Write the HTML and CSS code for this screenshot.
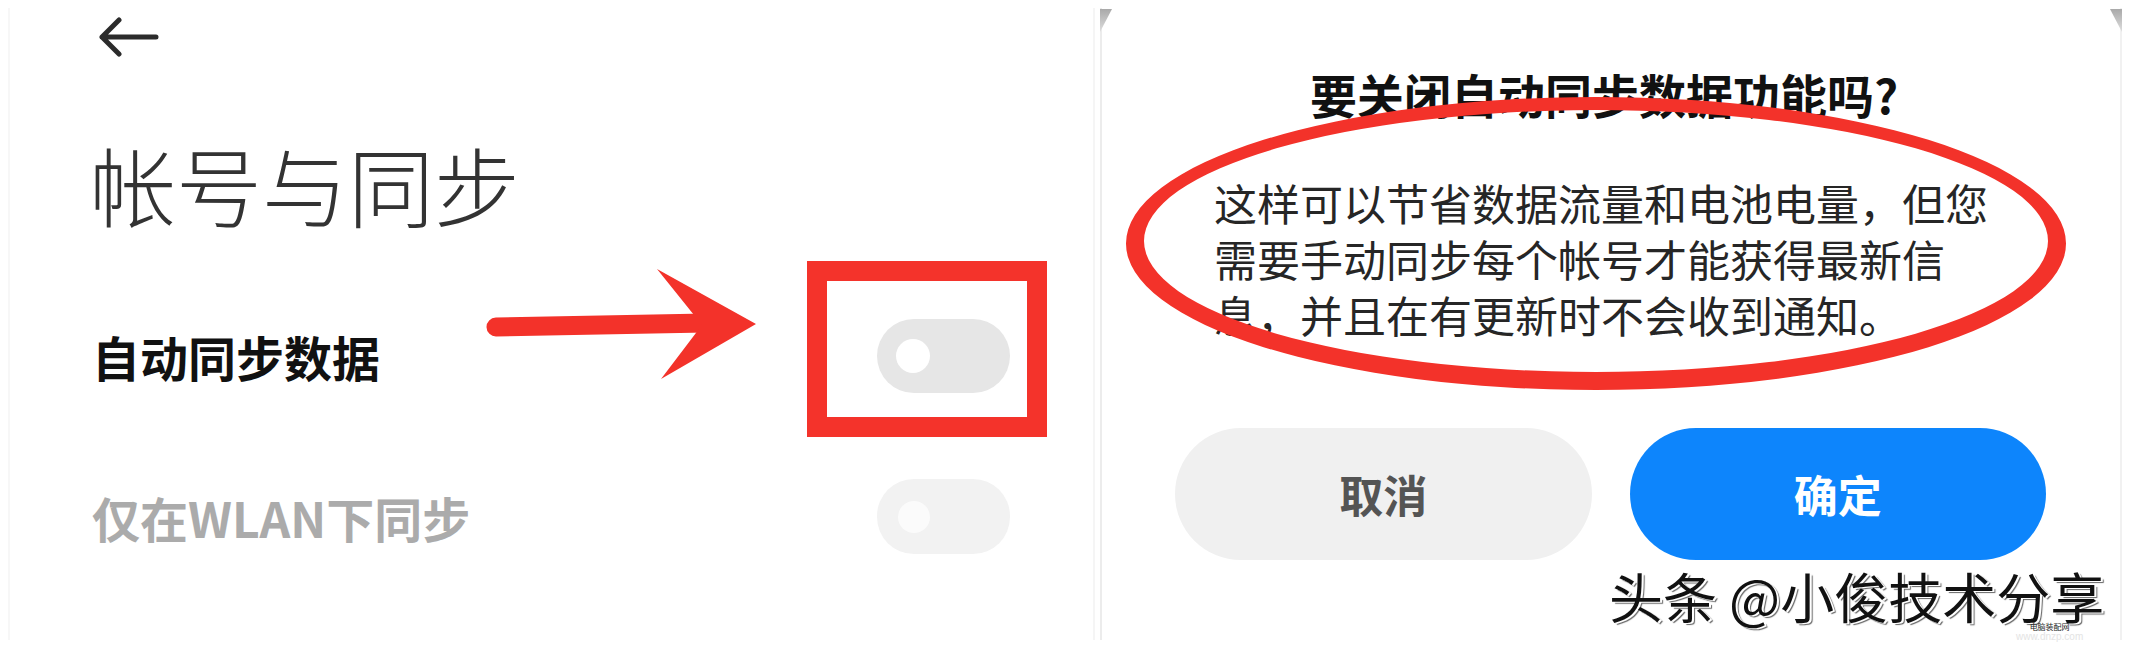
FILE: index.html
```html
<!DOCTYPE html>
<html lang="zh-CN">
<head>
<meta charset="utf-8">
<title>帐号与同步</title>
<link rel="stylesheet" href="styles.css">
</head>
<body>
<div class="page">
  <section class="panel panel-left">
    <header class="topbar">
      <svg class="back" viewBox="0 0 60 42" width="60" height="42" aria-label="返回">
        <path d="M20 4 L3 21 L20 38 M3 21 H57" fill="none" stroke="#2b2b2b" stroke-width="5" stroke-linecap="round" stroke-linejoin="round"/>
      </svg>
    </header>
    <h1 class="page-title">帐号与同步</h1>
    <div class="row">
      <span class="row-label">自动同步数据</span>
      <span class="switch"><span class="knob"></span></span>
    </div>
    <div class="row row-disabled">
      <span class="row-label">仅在WLAN下同步</span>
      <span class="switch switch-disabled"><span class="knob"></span></span>
    </div>
    <div class="mark-box"></div>
    <svg class="mark-arrow" viewBox="480 255 290 135" width="290" height="135">
      <line x1="496" y1="327" x2="706" y2="323" stroke="#f3322a" stroke-width="19" stroke-linecap="round"/>
      <polygon points="657,269 756,324 661,379 702,325" fill="#f3322a"/>
    </svg>
  </section>
  <section class="panel panel-right">
    <h2 class="dialog-title">要关闭自动同步数据功能吗?</h2>
    <p class="dialog-body">这样可以节省数据流量和电池电量，但您需要手动同步每个帐号才能获得最新信息，并且在有更新时不会收到通知。</p>
    <div class="actions">
      <button class="btn btn-cancel">取消</button>
      <button class="btn btn-ok">确定</button>
    </div>
    <svg class="mark-ellipse" viewBox="1110 85 980 320" width="980" height="320">
      <path fill="#f3322a" fill-rule="evenodd" d="M1126 243.5 A470 146.5 0 1 0 2066 243.5 A470 146.5 0 1 0 1126 243.5 Z M1144 241 A452 131 0 1 0 2048 241 A452 131 0 1 0 1144 241 Z"/>
    </svg>
    <div class="watermark">头条 @小俊技术分享</div>
    <div class="tiny-mark"><span class="tiny-dark">电脑装配网</span><span class="tiny-light">www.dnzp.com</span></div>
  </section>
</div>
</body>
</html>
```

FILE: styles.css
```css
* { box-sizing: border-box; }

html, body {
  margin: 0;
  padding: 0;
  background: #ffffff;
}

body {
  width: 2131px;
  height: 646px;
  overflow: hidden;
  font-family: "Noto Sans CJK SC", "Noto Sans", sans-serif;
}

.page {
  display: flex;
  gap: 5px;
  height: 646px;
  padding: 8px 9px 6px 8px;
}

.panel {
  position: relative;
  background: #ffffff;
}

.panel-left {
  width: 1087px;
  flex: none;
  display: flex;
  flex-direction: column;
  padding-left: 84px;
  border-left: 2px solid #f7f7f7;
  border-right: 2px solid #f5f5f5;
}

.topbar {
  padding-top: 8px;
  padding-left: 5px;
  height: 50px;
}

.back { display: block; }

.page-title {
  margin: 83px 0 0 -4px;
  font-size: 86px;
  line-height: 86px;
  font-weight: 300;
  color: #333333;
  letter-spacing: 0;
}

.row {
  height: 161px;
  display: flex;
  align-items: center;
  justify-content: space-between;
  padding-right: 83px;
}

.page-title + .row { margin-top: 48px; }

.row-label {
  font-size: 48px;
  font-weight: 700;
  color: #111111;
  margin-left: -2px;
}

.row-disabled .row-label { color: #ababab; }

.switch {
  width: 133px;
  height: 74px;
  border-radius: 37px;
  background: #e6e6e6;
  display: flex;
  align-items: center;
  padding-left: 19px;
}

.knob {
  width: 34px;
  height: 34px;
  border-radius: 50%;
  background: #ffffff;
}

.switch-disabled {
  height: 75px;
  background: #f2f2f2;
  padding-left: 21px;
}

.switch-disabled .knob {
  width: 32px;
  height: 32px;
  background: #fbfbfb;
}

.mark-box {
  position: absolute;
  left: 797px;
  top: 253px;
  width: 240px;
  height: 176px;
  border: 20px solid #f4332b;
}

.mark-arrow {
  position: absolute;
  left: 470px;
  top: 247px;
}

.panel-right {
  flex: 1;
  display: flex;
  flex-direction: column;
  border-left: 2px solid #ececec;
  border-right: 2px solid #f1f1f1;
}

.panel-right::before,
.panel-right::after {
  content: "";
  position: absolute;
  top: 1px;
  width: 12px;
  height: 23px;
  background: linear-gradient(#a9a9a9, #dedede);
}

.panel-right::before {
  left: -2px;
  clip-path: polygon(0 0, 100% 0, 0 100%);
}

.panel-right::after {
  right: -2px;
  clip-path: polygon(0 0, 100% 0, 100% 100%);
}

.dialog-title {
  margin: 62px 14px 0 0;
  text-align: center;
  font-size: 47px;
  line-height: 47px;
  font-weight: 700;
  color: #111111;
}

.dialog-body {
  margin: 57px 0 0 0;
  padding: 0 116px 0 112px;
  font-size: 43px;
  line-height: 56px;
  font-weight: 400;
  color: #262626;
}

.actions {
  margin-top: 86px;
  display: flex;
  gap: 38px;
  padding: 0 74px 0 73px;
}

.btn {
  flex: 1;
  height: 132px;
  border: none;
  border-radius: 66px;
  font-family: inherit;
  font-size: 44px;
  font-weight: 700;
  padding: 0;
}

.btn-cancel {
  background: #f0f0f0;
  color: #545454;
}

.btn-ok {
  background: #0d85fc;
  color: #ffffff;
}

.mark-ellipse {
  position: absolute;
  left: 8px;
  top: 77px;
}

.watermark {
  position: absolute;
  left: 507px;
  top: 564px;
  font-size: 54px;
  line-height: 48px;
  color: #111111;
  white-space: nowrap;
  text-shadow: 2px 1px 0 #ffffff, 3px 2px 1px #666666;
}

.tiny-mark {
  position: absolute;
  left: 914px;
  top: 614px;
  display: flex;
  flex-direction: column;
  align-items: center;
  gap: 1px;
}

.tiny-dark {
  font-size: 8px;
  line-height: 9px;
  color: #222222;
}

.tiny-light {
  font-size: 10px;
  line-height: 10px;
  color: #e4e4e4;
  font-family: "Liberation Sans", sans-serif;
}
```
